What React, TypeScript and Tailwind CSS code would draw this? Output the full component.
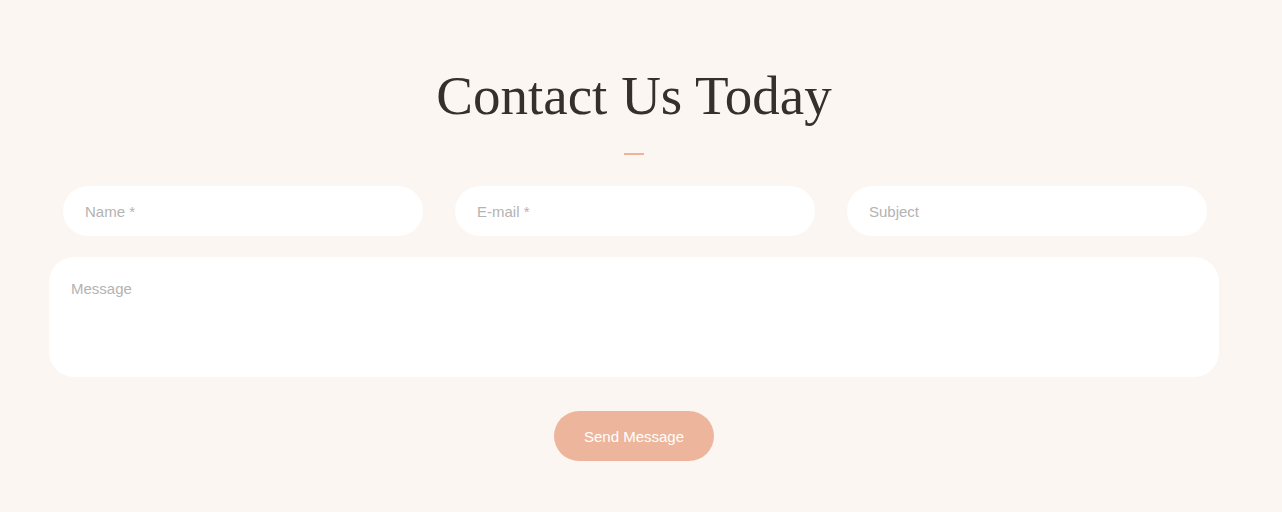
import React from "react";

export default function App() {
  const sans = { fontFamily: '"Liberation Sans", Arial, sans-serif' };
  return (
    <div className="w-full h-[512px] bg-[#fbf6f1] overflow-hidden">
      <div className="w-[1268px]">
        <div className="w-[1170px] mx-auto flex flex-col items-center pt-[62px]">
          <h1
            className="text-[55px] leading-[68px] text-[#35302b] font-normal"
            style={{ fontFamily: '"Liberation Serif", "Times New Roman", serif' }}
          >
            Contact Us Today
          </h1>
          <div className="w-[20px] h-[2px] bg-[#eeb49a] mt-[23px]" />
          <div className="w-full px-[14px] mt-[31px] grid grid-cols-[360px_360px_360px] gap-[32px]" style={sans}>
            {["Name *", "E-mail *", "Subject"].map((p) => (
              <div
                key={p}
                className="h-[50px] rounded-[25px] bg-white flex items-center px-[22px] pt-[2px] text-[15px] text-[#b3b3b3]"
              >
                {p}
              </div>
            ))}
          </div>
          <div
            className="w-full mt-[21px] h-[120px] rounded-[25px] bg-white px-[22px] pt-[23px] text-[15px] leading-[18px] text-[#b3b3b3]"
            style={sans}
          >
            Message
          </div>
          <div
            className="mt-[34px] w-[160px] h-[50px] rounded-[25px] bg-[#edb59b] flex items-center justify-center pt-[2px] text-[15px] text-white"
            style={sans}
          >
            Send Message
          </div>
        </div>
      </div>
    </div>
  );
}
